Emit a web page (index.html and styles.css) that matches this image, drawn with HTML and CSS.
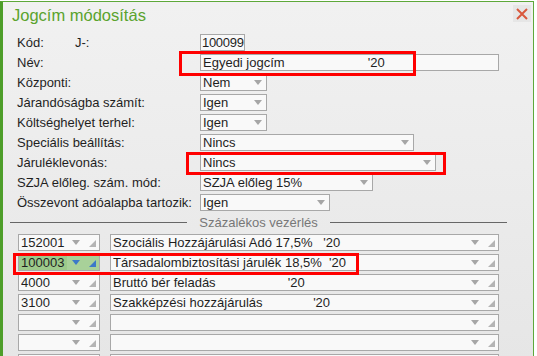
FILE: index.html
```html
<!DOCTYPE html>
<html lang="hu">
<head>
  <meta charset="UTF-8">
  <meta name="viewport" content="width=device-width, initial-scale=1.0">
  <title>Jogcím módosítás</title>
  <link rel="stylesheet" href="styles.css">
</head>
<body>
  <div class="window">
    <div class="title-bar">
      <span class="title">Jogcím módosítás</span>
      <span class="close">
        <svg width="12" height="12" viewBox="0 0 12 12">
          <path d="M1 1 L11 11 M11 1 L1 11" stroke="#d9583d" stroke-width="2" fill="none"/>
        </svg>
      </span>
    </div>

    <div class="form">
      <div class="row">
        <label class="lbl"><span class="kod">Kód:</span>J-:</label>
        <div class="field w-code">100099</div>
      </div>
      <div class="row">
        <label class="lbl">Név:</label>
        <div class="field w-name">Egyedi jogcím                       '20</div>
      </div>
      <div class="row">
        <label class="lbl">Központi:</label>
        <div class="select w-small"><span class="val">Nem</span><span class="arrow"></span></div>
      </div>
      <div class="row">
        <label class="lbl">Járandóságba számít:</label>
        <div class="select w-small"><span class="val">Igen</span><span class="arrow"></span></div>
      </div>
      <div class="row">
        <label class="lbl">Költséghelyet terhel:</label>
        <div class="select w-small"><span class="val">Igen</span><span class="arrow"></span></div>
      </div>
      <div class="row">
        <label class="lbl">Speciális beállítás:</label>
        <div class="select w-spec"><span class="val">Nincs</span><span class="arrow"></span></div>
      </div>
      <div class="row">
        <label class="lbl">Járuléklevonás:</label>
        <div class="select w-jar"><span class="val">Nincs</span><span class="arrow"></span></div>
      </div>
      <div class="row">
        <label class="lbl">SZJA előleg. szám. mód:</label>
        <div class="select w-szja"><span class="val">SZJA előleg 15%</span><span class="arrow"></span></div>
      </div>
      <div class="row">
        <label class="lbl">Összevont adóalapba tartozik:</label>
        <div class="select w-ossz"><span class="val">Igen</span><span class="arrow"></span></div>
      </div>
    </div>

    <div class="section">
      <span class="line"></span>
      <span class="section-title">Százalékos vezérlés</span>
      <span class="line"></span>
    </div>

    <div class="grid">
      <div class="grid-row">
        <div class="combo code"><span class="val">152001</span><span class="arrow"></span><span class="corner"></span></div>
        <div class="combo desc"><span class="val">Szociális Hozzájárulási Adó 17,5%   '20</span><span class="arrow"></span><span class="corner"></span></div>
      </div>
      <div class="grid-row">
        <div class="combo code active"><span class="val">100003</span><span class="arrow"></span><span class="corner"></span></div>
        <div class="combo desc"><span class="val">Társadalombiztosítási járulék 18,5%  '20</span><span class="arrow"></span><span class="corner"></span></div>
      </div>
      <div class="grid-row">
        <div class="combo code"><span class="val">4000</span><span class="arrow"></span><span class="corner"></span></div>
        <div class="combo desc"><span class="val">Bruttó bér feladás                    '20</span><span class="arrow"></span><span class="corner"></span></div>
      </div>
      <div class="grid-row">
        <div class="combo code"><span class="val">3100</span><span class="arrow"></span><span class="corner"></span></div>
        <div class="combo desc"><span class="val">Szakképzési hozzájárulás              '20</span><span class="arrow"></span><span class="corner"></span></div>
      </div>
      <div class="grid-row">
        <div class="combo code"><span class="val"></span><span class="arrow"></span><span class="corner"></span></div>
        <div class="combo desc"><span class="val"></span><span class="arrow"></span><span class="corner"></span></div>
      </div>
      <div class="grid-row">
        <div class="combo code"><span class="val"></span><span class="arrow"></span><span class="corner"></span></div>
        <div class="combo desc"><span class="val"></span><span class="arrow"></span><span class="corner"></span></div>
      </div>
      <div class="grid-row">
        <div class="combo code"><span class="val"></span><span class="arrow"></span><span class="corner"></span></div>
        <div class="combo desc"><span class="val"></span><span class="arrow"></span><span class="corner"></span></div>
      </div>
    </div>
  </div>

  <!-- red highlight frames drawn over the dialog -->
  <div class="mark mark-name"></div>
  <div class="mark mark-jar"></div>
  <div class="mark mark-row"></div>
</body>
</html>
```

FILE: styles.css
```css
body {
  margin: 0;
  background-color: #fff;
  font-family: "Liberation Sans", Arial, sans-serif;
  font-size: 13px;
  color: #1f1f1f;
  position: relative;
  overflow: hidden;
  height: 356px;
}

.window {
  margin-top: 1px;
  width: 530px;
  height: 360px;
  border-top: 1px solid #5ea83a;
  border-left: 3px solid #4e9e2a;
  border-right: 1px solid #5ea83a;
  background: linear-gradient(#f1f1f1, #e6e6e6);
}

.title-bar {
  height: 32px;
  box-sizing: border-box;
  padding: 3px 2px 0 9px;
  display: flex;
  justify-content: space-between;
  align-items: flex-start;
}

.title {
  font-size: 16.5px;
  line-height: 20px;
  color: #5aa32d;
}

.close {
  width: 18px;
  height: 17px;
  background-color: #e6e6e6;
  display: flex;
  justify-content: center;
  align-items: center;
}

.form {
  padding-left: 14px;
}

.row {
  display: flex;
  height: 20px;
}

.lbl {
  width: 183px;
  line-height: 17px;
  white-space: nowrap;
}

.kod {
  display: inline-block;
  width: 58px;
}

.field {
  box-sizing: border-box;
  height: 17px;
  padding: 0 1px 0 2px;
  border: 1px solid #a8a8a8;
  background-color: #f9f9f9;
  line-height: 15px;
  white-space: pre;
}

.w-code {
  width: 45px;
  padding-left: 1px;
  letter-spacing: -0.3px;
}

.w-name { width: 299px; }

.select {
  box-sizing: border-box;
  height: 17px;
  border: 1px solid #a8a8a8;
  background-color: #f9f9f9;
  display: flex;
  align-items: center;
  padding: 0 4px 0 2px;
  line-height: 15px;
}

.select .val {
  flex: 1;
  white-space: nowrap;
}

.arrow {
  width: 0;
  height: 0;
  border-left: 4.5px solid transparent;
  border-right: 4.5px solid transparent;
  border-top: 5px solid #a6a6a6;
}

.w-small { width: 67px; }
.w-spec { width: 214px; }
.w-jar { width: 236px; }
.w-szja { width: 173px; }
.w-ossz { width: 130px; }

.section {
  margin-left: 7px;
  width: 497px;
  height: 17px;
  margin-bottom: 3px;
  display: flex;
  align-items: center;
}

.line {
  flex: 1;
  height: 1px;
  background-color: #666;
}

.section-title {
  padding: 0 12px;
  color: #777;
  line-height: 15px;
}

.grid {
  padding-left: 15px;
}

.grid-row {
  display: flex;
  gap: 10px;
  margin-bottom: 3px;
}

.combo {
  box-sizing: border-box;
  height: 17px;
  border: 1px solid #a8a8a8;
  background-color: #f9f9f9;
  display: flex;
  align-items: center;
  padding-left: 2px;
  line-height: 15px;
}

.combo .val {
  flex: 1;
  white-space: pre;
  overflow: hidden;
}

.combo .arrow {
  margin-right: 9px;
}

.corner {
  width: 0;
  height: 0;
  border-left: 7px solid transparent;
  border-bottom: 7px solid #b4b4b4;
  margin-right: 3px;
  align-self: flex-end;
  margin-bottom: 3px;
}

.code { width: 82px; }
.desc { width: 389px; }

.combo.active {
  background: linear-gradient(to right, #9dca8b 0, #9dca8b 48px, #a8d199 48px);
}

.combo.active .arrow {
  border-top-color: #3b79c8;
}

.combo.active .corner {
  border-bottom-color: #3b79c8;
}

.mark {
  position: absolute;
  box-sizing: border-box;
  border: 3px solid #ff0000;
}

.mark-name {
  left: 179px;
  top: 51px;
  width: 237px;
  height: 25px;
}

.mark-jar {
  left: 186px;
  top: 152px;
  width: 260px;
  height: 23px;
}

.mark-row {
  left: 13px;
  top: 253px;
  width: 346px;
  height: 22px;
}
```
